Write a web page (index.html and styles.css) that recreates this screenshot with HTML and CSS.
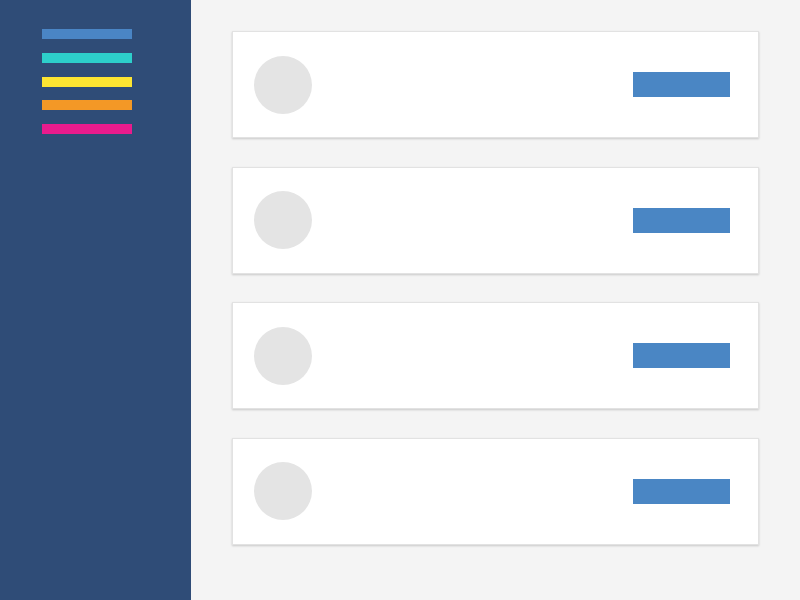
FILE: index.html
```html
<!DOCTYPE html>
<html>
<head>
<meta charset="utf-8">
<link rel="stylesheet" href="styles.css">
</head>
<body>
<div class="app">
  <aside class="sidebar">
    <div class="bar bar-blue"></div>
    <div class="bar bar-cyan"></div>
    <div class="bar bar-yellow"></div>
    <div class="bar bar-orange"></div>
    <div class="bar bar-pink"></div>
  </aside>
  <main class="main">
    <div class="card"><div class="avatar"></div><div class="btn"></div></div>
    <div class="card"><div class="avatar"></div><div class="btn"></div></div>
    <div class="card"><div class="avatar"></div><div class="btn"></div></div>
    <div class="card"><div class="avatar"></div><div class="btn"></div></div>
  </main>
</div>
</body>
</html>
```
FILE: styles.css
```css
html, body {
  margin: 0;
  padding: 0;
  height: 100%;
  font-family: "Liberation Sans", sans-serif;
}
.app {
  display: flex;
  height: 600px;
  background: #f4f4f4;
}
.sidebar {
  width: 191px;
  flex: none;
  background: #2f4c77;
  padding: 29px 0 0 42px;
  box-sizing: border-box;
  display: flex;
  flex-direction: column;
  gap: 13.75px;
}
.bar {
  width: 90px;
  height: 10px;
}
.bar-blue { background: #4a85c5; }
.bar-cyan { background: #2dcfcb; }
.bar-yellow { background: #fde532; }
.bar-orange { background: #f39826; }
.bar-pink { background: #e91b8d; }
.main {
  flex: 1;
  padding: 31px 0 0 41px;
  display: flex;
  flex-direction: column;
  gap: 28.67px;
}
.card {
  width: 527px;
  height: 107px;
  box-sizing: border-box;
  background: #fff;
  border: 1px solid #e2e2e2;
  box-shadow: 0 1px 2px rgba(0,0,0,0.18);
  display: flex;
  align-items: center;
  justify-content: space-between;
  padding: 0 28px 0 21px;
}
.avatar {
  width: 58px;
  height: 58px;
  border-radius: 50%;
  background: #e4e4e4;
}
.btn {
  width: 97px;
  height: 25px;
  background: #4a86c4;
}
```
